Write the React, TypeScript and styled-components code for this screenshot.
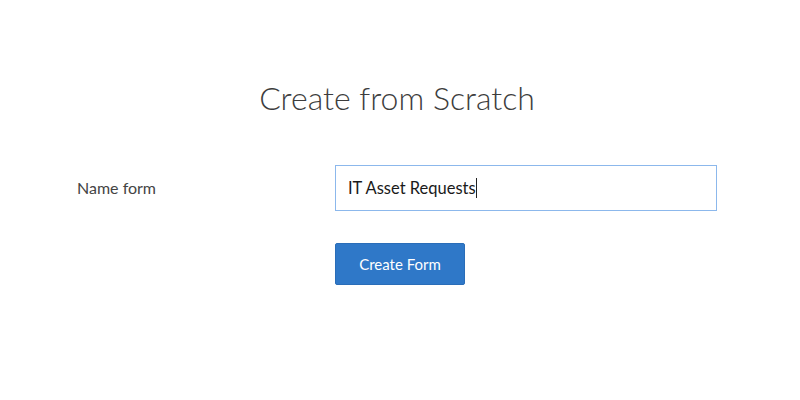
import styled, { createGlobalStyle } from 'styled-components';
import { useState } from 'react';

const GlobalStyle = createGlobalStyle`
  body {
    margin: 0;
    background: #ffffff;
    font-family: Lato, "Open Sans", sans-serif;
  }
`;

function App() {
  const [name, setName] = useState('IT Asset Requests');

  return (
    <StyledPage>
      <GlobalStyle />
      <StyledTitle>Create from Scratch</StyledTitle>
      <StyledForm onSubmit={(e) => e.preventDefault()}>
        <StyledLabel htmlFor="form-name">Name form</StyledLabel>
        <StyledField>
          <StyledInput id="form-name" value={name} onChange={(e) => setName(e.target.value)} />
          {/* text caret drawn over the field, since the screenshot has no focus */}
          <StyledCaretLayer aria-hidden>
            <span>{name}</span>
            <StyledCaret />
          </StyledCaretLayer>
        </StyledField>
        <StyledButton type="submit">Create Form</StyledButton>
      </StyledForm>
    </StyledPage>
  );
}

const StyledPage = styled.div`
  width: 800px;
  height: 400px;
  padding-top: 78px;
  box-sizing: border-box;
`;

const StyledTitle = styled.h1`
  margin: 0 0 47px;
  text-align: center;
  font-size: 32px;
  font-weight: 300;
  color: #3d3d3d;
  line-height: 40px;
  padding-right: 6px;
`;

const StyledForm = styled.form`
  display: grid;
  grid-template-columns: 258px 382px;
  row-gap: 32px;
  padding-left: 77px;
  align-items: center;
`;

const StyledLabel = styled.label`
  font-size: 16px;
  color: #444444;
  margin-top: -1px;
`;

const StyledField = styled.div`
  position: relative;
  height: 46px;
`;

const StyledInput = styled.input`
  box-sizing: border-box;
  width: 100%;
  height: 46px;
  padding: 0 12px;
  border: 1px solid #8cb8ec;
  border-radius: 0;
  outline: none;
  font-family: Lato, sans-serif;
  font-size: 16.5px;
  color: #1a1a1a;
`;

const StyledCaretLayer = styled.div`
  position: absolute;
  inset: 0;
  display: flex;
  align-items: center;
  padding: 0 13px;
  font-family: Lato, sans-serif;
  font-size: 16.5px;
  color: transparent;
  pointer-events: none;
  white-space: pre;
`;

const StyledCaret = styled.span`
  width: 1px;
  height: 20px;
  background: #222222;
`;

const StyledButton = styled.button`
  grid-column: 2;
  justify-self: start;
  width: 130px;
  height: 42px;
  border: 1px solid #2a6db8;
  border-radius: 2px;
  background: #2f78c8;
  color: #ffffff;
  font-family: Lato, sans-serif;
  font-size: 15px;
  cursor: pointer;
`;

export default App;
